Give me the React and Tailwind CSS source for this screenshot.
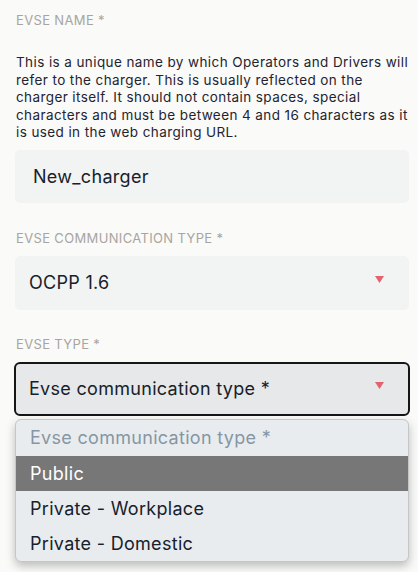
import React from 'react';

const font = { fontFamily: 'Inter, "Open Sans", sans-serif' };

function Caret() {
  return (
    <svg width="9" height="7" viewBox="0 0 9 7" className="mb-[7px] shrink-0">
      <path d="M0 0 H9 L4.5 7 Z" fill="#e5636f" />
    </svg>
  );
}

function Label({ children, className = '' }) {
  return (
    <div className={`pl-px text-[13px] leading-5 uppercase tracking-[0.35px] text-[#a8a5a0] ${className}`}>{children}</div>
  );
}

export default function App() {
  const options = ['Public', 'Private - Workplace', 'Private - Domestic'];

  return (
    <div className="min-h-[572px] bg-[#fafaf9] pl-[15px] pr-[9px] pt-[10px] text-[#17212b]" style={font}>
      <Label>Evse name *</Label>

      <p className="mt-[24px] pl-px text-[13.5px] leading-[17.6px] tracking-[0.4px] text-[#1f2430]">
        This is a unique name by which Operators and Drivers will refer to the charger. This is usually reflected on the
        charger itself. It should not contain spaces, special characters and must be between 4 and 16 characters as it
        is used in the web charging URL.
      </p>

      <div className="mt-[8px] flex h-[53px] items-center rounded-[5px] bg-[#f2f3f3] pl-[18px] text-[18px] tracking-[0.3px]">
        New_charger
      </div>

      <Label className="mt-[25px]">Evse communication type *</Label>

      <div className="mt-[8px] flex h-[54px] items-center justify-between rounded-[5px] bg-[#f2f3f3] pl-[14px] pr-[25px] text-[18px] tracking-[0.3px]">
        <span>OCPP 1.6</span>
        <Caret />
      </div>

      <Label className="mt-[24px]">Evse type *</Label>

      <div className="relative mt-[8px] tracking-[0.3px]">
        <div className="-mx-px flex h-[54px] items-center justify-between rounded-[6px] border-2 border-[#161616] bg-[#e6e8e9] pl-[13px] pr-[24px] text-[18px]">
          <span>Evse communication type *</span>
          <Caret />
        </div>

        <div className="absolute left-0 right-0 top-[57px] z-10 flex flex-col overflow-hidden rounded-[6px] border border-[#c4c6c8] bg-[#e9ecef] text-[18px] shadow-[0_4px_10px_rgba(0,0,0,0.25)]">
          <div className="flex h-[36px] items-center pl-[14px] text-[#8696a3]">Evse communication type *</div>
          {options.map((o, i) => (
            <div
              key={o}
              className={`flex h-[35px] items-center pl-[14px] ${i === 0 ? 'bg-[#777777] text-white' : 'text-[#17212b]'}`}
            >
              {o}
            </div>
          ))}
        </div>
      </div>
    </div>
  );
}
